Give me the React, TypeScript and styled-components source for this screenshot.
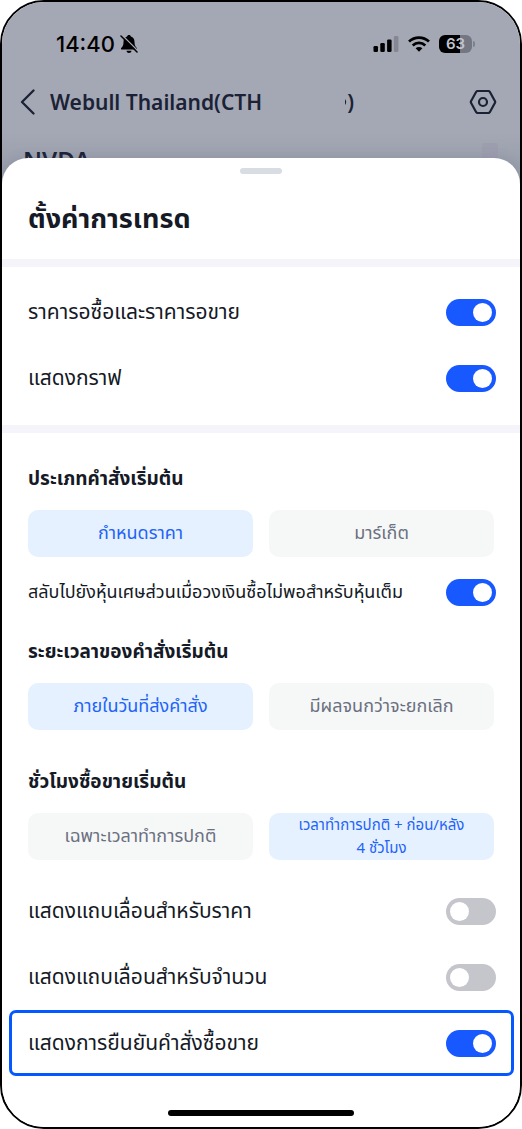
import { useState } from "react";
import styled, { createGlobalStyle, css } from "styled-components";

const GlobalStyle = createGlobalStyle`
  *, *::before, *::after { box-sizing: border-box; }
  body {
    margin: 0;
    background: #fff;
    color: #151a26;
    font-family: "Noto Sans", "Noto Sans Thai", "Liberation Sans", sans-serif;
  }
  button, input { font: inherit; margin: 0; }
`;

const Phone = styled.div`
  display: flex;
  flex-direction: column;
  min-height: 100vh;
  border: 2px solid #000;
  border-radius: 44px;
  overflow: hidden;
  background: #fff;
`;

const Backdrop = styled.div`
  height: 184px;
  background: linear-gradient(#a4a8b4 130px, #9a9fad 164px);
  overflow: hidden;
`;

const StatusBar = styled.div`
  display: flex;
  align-items: center;
  justify-content: space-between;
  height: 84px;
  padding: 0 45px 0 54px;
  color: #000;
`;

const StatusGroup = styled.div<{ $gap: number }>`
  display: flex;
  align-items: center;
  gap: ${(p) => p.$gap}px;
`;

const Clock = styled.span`
  font: 500 22px/28px Inter, sans-serif;
`;

const NavBar = styled.header`
  display: flex;
  align-items: center;
  height: 32px;
  padding: 0 23px 0 18px;
  color: #1b2236;
`;

const IconButton = styled.button`
  display: flex;
  padding: 0;
  border: 0;
  background: none;
  color: inherit;
`;

const Account = styled.h1`
  display: flex;
  flex: 1;
  align-items: center;
  margin: 0 0 0 14px;
  font-size: 21px;
  font-weight: 600;
  line-height: 30px;
  white-space: nowrap;
`;

const MaskEdge = styled.svg`
  margin-left: 83px;
`;

const Quote = styled.div`
  display: flex;
  justify-content: space-between;
  padding: 25px 22px 0 21px;
  color: #1b2236;
  font-size: 24px;
  font-weight: 600;
  line-height: 34px;
`;

const QuoteBadge = styled.span`
  width: 16px;
  height: 24px;
  border-radius: 3px;
  background: #9c9eae;
`;

const Sheet = styled.main`
  display: flex;
  flex: 1;
  flex-direction: column;
  margin-top: -28px;
  border-radius: 26px 26px 0 0;
  background: #fff;
  box-shadow: 0 0 12px rgba(80, 90, 115, 0.2);
`;

const Handle = styled.div`
  width: 42px;
  height: 6px;
  margin: 10px auto 0;
  border-radius: 3px;
  background: #d8dce3;
`;

const Title = styled.h2`
  margin: 0;
  padding: 23px 26px 20px;
  font-size: 27px;
  font-weight: 700;
  line-height: 42px;
`;

const Section = styled.section<{ $padded?: boolean }>`
  border-top: 8px solid #f5f4fa;
  padding: ${(p) => (p.$padded ? "29px 0 0" : "12px 0 14px")};
`;

const Row = styled.label<{ $compact?: boolean; $highlighted?: boolean }>`
  display: flex;
  align-items: center;
  justify-content: space-between;
  height: ${(p) => (p.$compact ? 70 : 66)}px;
  margin-bottom: ${(p) => (p.$compact ? 8 : 0)}px;
  padding: 0 24px 0 26px;
  font-size: ${(p) => (p.$compact ? 18 : 21)}px;
  line-height: 32px;
  ${(p) =>
    p.$highlighted &&
    css`
      margin: 0 6px 0 7px;
      padding: 0 15px 0 16px;
      border: 3px solid #0558ff;
      border-radius: 7px;
    `}
`;

const RowText = styled.span`
  padding-bottom: 2px;
`;

const Switch = styled.input`
  appearance: none;
  flex: none;
  width: 50px;
  height: 27px;
  padding: 4px;
  border-radius: 14px;
  background: #c5c6cc;

  &::before {
    content: "";
    display: block;
    width: 19px;
    height: 19px;
    border-radius: 50%;
    background: #fff;
  }
  &:checked { background: #1859ff; }
  &:checked::before { margin-left: auto; }
`;

const SubTitle = styled.h3`
  margin: 0;
  padding: 0 26px;
  font-size: 19px;
  font-weight: 700;
  line-height: 32px;
`;

const Options = styled.div`
  display: grid;
  grid-template-columns: 1fr 1fr;
  gap: 16px;
  padding: 16px 26px 0;
`;

const Option = styled.button<{ $small?: boolean }>`
  height: 47px;
  padding: 0 28px 2px;
  border: 0;
  border-radius: 10px;
  background: #f6f8f8;
  color: #6b7080;
  font-size: ${(p) => (p.$small ? 15 : 18)}px;
  line-height: 23px;

  &[aria-pressed="true"] {
    background: #e5f1ff;
    color: #1f63f7;
  }
`;

const Group = styled.div<{ $space: number }>`
  padding-bottom: ${(p) => p.$space}px;
`;

const HomeBar = styled.div`
  width: 186px;
  height: 6px;
  margin: auto auto 11px;
  border-radius: 3px;
  background: #000;
`;

function Toggle(props: { label: string; on?: boolean; compact?: boolean; highlighted?: boolean }) {
  const [on, setOn] = useState(!!props.on);
  return (
    <Row $compact={props.compact} $highlighted={props.highlighted}>
      <RowText>{props.label}</RowText>
      <Switch type="checkbox" role="switch" checked={on} onChange={() => setOn(!on)} />
    </Row>
  );
}

function Choice(props: { title: string; options: string[]; initial: number; smallIndex?: number; space: number }) {
  const [picked, setPicked] = useState(props.initial);
  return (
    <Group $space={props.space} role="group" aria-label={props.title}>
      <SubTitle>{props.title}</SubTitle>
      <Options>
        {props.options.map((text, i) => (
          <Option
            key={text}
            type="button"
            $small={i === props.smallIndex}
            aria-pressed={i === picked}
            onClick={() => setPicked(i)}
          >
            {text}
          </Option>
        ))}
      </Options>
    </Group>
  );
}

const MutedBell = () => (
  <svg width="18" height="20" viewBox="0 0 18 20" fill="none">
    <path d="M9 1C7.900 1 7.200 1.700 7.100 2.500C4.600 3.300 3.500 5.300 3.500 8C3.500 11.500 2.500 12.500 1.200 14C.6 14.800 1 15.600 1.900 15.600H16.100C17 15.600 17.400 14.800 16.800 14C15.500 12.500 14.500 11.500 14.500 8C14.500 5.300 13.400 3.300 10.900 2.500C10.800 1.700 10.100 1 9 1Z" fill="#000" />
    <path d="M6.500 16.800H11.500C11.300 18.200 10.300 19 9 19S6.700 18.200 6.500 16.800Z" fill="#000" />
    <path d="M2.200 1.200L18 17" stroke="#a4a8b4" strokeWidth="1.400" />
    <path d="M1 2L17 18" stroke="#000" strokeWidth="1.500" strokeLinecap="round" />
  </svg>
);

const Signal = () => (
  <svg width="26" height="16" viewBox="0 0 26 16">
    <rect x="0.500" y="10" width="4.500" height="6" rx="1.300" />
    <rect x="7.300" y="7" width="4.500" height="9" rx="1.300" />
    <rect x="14.100" y="3.500" width="4.500" height="12.500" rx="1.300" />
    <rect x="20.900" y="0" width="4.500" height="16" rx="1.300" fill="#858892" />
  </svg>
);

const Wifi = () => (
  <svg width="22" height="16" viewBox="0 0 22 16" fill="none" stroke="#000" strokeWidth="2.700">
    <path d="M1 5.600C6.700 .2 15.300 .2 21 5.600" />
    <path d="M4.700 9.500C8.300 6.100 13.700 6.100 17.300 9.500" />
    <path d="M11 15.700L7.600 12.300C9.500 10.600 12.500 10.600 14.400 12.300Z" fill="#000" stroke="none" />
  </svg>
);

const BatteryBody = styled.span`
  display: block;
  width: 33px;
  height: 18px;
  border-radius: 6px;
  background: linear-gradient(90deg, #000 63%, #747783 63%);
  color: #c3c5cd;
  font: 600 15px/18px Inter, sans-serif;
  text-align: center;
`;

const BatteryTip = styled.span`
  width: 2px;
  height: 6px;
  border-radius: 0 2px 2px 0;
  background: #7e818c;
`;

const BackIcon = () => (
  <svg width="16" height="26" viewBox="0 0 16 26" fill="none" stroke="currentColor" strokeWidth="2.300" strokeLinecap="round" strokeLinejoin="round">
    <path d="M13.500 1.500L2 13L13.500 24.500" />
  </svg>
);

const HexIcon = () => (
  <svg width="28" height="26" viewBox="0 0 28 26" fill="none" stroke="currentColor" strokeWidth="2.200" strokeLinejoin="round">
    <path d="M8.600 2H19.400Q20.300 2 20.800 2.800L26 12.200Q26.500 13 26 13.800L20.800 23.200Q20.300 24 19.400 24H8.600Q7.700 24 7.200 23.200L2 13.800Q1.500 13 2 12.200L7.200 2.800Q7.700 2 8.600 2Z" />
    <circle cx="14" cy="13" r="4" />
  </svg>
);

export default function App() {
  return (
    <>
      <GlobalStyle />
      <Phone>
        <Backdrop>
          <StatusBar>
            <StatusGroup $gap={5}>
              <Clock>14:40</Clock>
              <MutedBell />
            </StatusGroup>
            <StatusGroup $gap={9}>
              <Signal />
              <Wifi />
              <StatusGroup $gap={1}>
                <BatteryBody>63</BatteryBody>
                <BatteryTip />
              </StatusGroup>
            </StatusGroup>
          </StatusBar>
          <NavBar>
            <IconButton type="button" aria-label="Back">
              <BackIcon />
            </IconButton>
            <Account>
              <span>Webull Thailand(CTH</span>
              <MaskEdge width="2" height="6" viewBox="0 0 2 6" aria-hidden="true">
                <path d="M0 0Q2.400 3 0 6Z" fill="currentColor" />
              </MaskEdge>
              <span>)</span>
            </Account>
            <IconButton type="button" aria-label="Settings">
              <HexIcon />
            </IconButton>
          </NavBar>
          <Quote>
            NVDA
            <QuoteBadge />
          </Quote>
        </Backdrop>
        <Sheet>
          <Handle />
          <Title>ตั้งค่าการเทรด</Title>
          <Section>
            <Toggle label="ราคารอซื้อและราคารอขาย" on />
            <Toggle label="แสดงกราฟ" on />
          </Section>
          <Section $padded>
            <Choice title="ประเภทคำสั่งเริ่มต้น" options={["กำหนดราคา", "มาร์เก็ต"]} initial={0} space={0} />
            <Toggle label="สลับไปยังหุ้นเศษส่วนเมื่อวงเงินซื้อไม่พอสำหรับหุ้นเต็ม" on compact />
            <Choice
              title="ระยะเวลาของคำสั่งเริ่มต้น"
              options={["ภายในวันที่ส่งคำสั่ง", "มีผลจนกว่าจะยกเลิก"]}
              initial={0}
              space={35}
            />
            <Choice
              title="ชั่วโมงซื้อขายเริ่มต้น"
              options={["เฉพาะเวลาทำการปกติ", "เวลาทำการปกติ + ก่อน/หลัง 4 ชั่วโมง"]}
              initial={1}
              smallIndex={1}
              space={18}
            />
            <Toggle label="แสดงแถบเลื่อนสำหรับราคา" />
            <Toggle label="แสดงแถบเลื่อนสำหรับจำนวน" />
            <Toggle label="แสดงการยืนยันคำสั่งซื้อขาย" on highlighted />
          </Section>
          <HomeBar />
        </Sheet>
      </Phone>
    </>
  );
}
